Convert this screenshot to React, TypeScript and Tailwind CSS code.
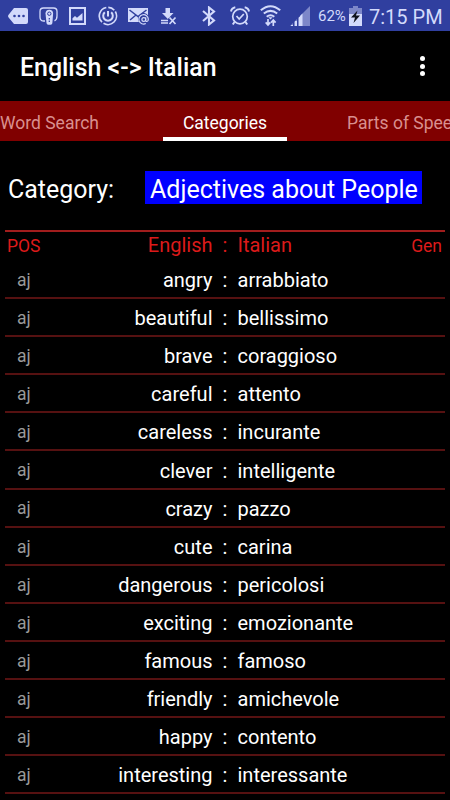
const words = [
  { english: "angry", italian: "arrabbiato" },
  { english: "beautiful", italian: "bellissimo" },
  { english: "brave", italian: "coraggioso" },
  { english: "careful", italian: "attento" },
  { english: "careless", italian: "incurante" },
  { english: "clever", italian: "intelligente" },
  { english: "crazy", italian: "pazzo" },
  { english: "cute", italian: "carina" },
  { english: "dangerous", italian: "pericolosi" },
  { english: "exciting", italian: "emozionante" },
  { english: "famous", italian: "famoso" },
  { english: "friendly", italian: "amichevole" },
  { english: "happy", italian: "contento" },
  { english: "interesting", italian: "interessante" },
];

function StatusBar() {
  return (
    <div className="flex h-[31px] shrink-0 items-center bg-[#303f9f] pt-px pl-2 text-[#d3dafb]">

      {/* MORE NOTIFICATIONS */}
      <svg className="h-4 w-5 shrink-0" viewBox="0 0 20 16">
        <path d="M6 0h12a2 2 0 0 1 2 2v12a2 2 0 0 1-2 2H6L.6 9.4a2 2 0 0 1 0-2.6z" fill="currentColor" />
        <circle cx="6.5" cy="8" r="1.3" fill="#303f9f" />
        <circle cx="11" cy="8" r="1.3" fill="#303f9f" />
        <circle cx="15.5" cy="8" r="1.3" fill="#303f9f" />
      </svg>

      {/* REMOTE */}
      <svg className="ml-[11px] h-[18px] w-[19px] shrink-0" viewBox="0 0 19 18" fill="none">
        <path d="M6 14H4.5C1.5 14 1 12 1 10V4.5C1 2 2 1 4.5 1h10C17 1 18 2 18 4.5V9c0 2.5-.7 4-2.5 4.8" stroke="currentColor" strokeWidth="1.3" />
        <path d="M6.5 6.5a3.8 3.8 0 0 1 7.6 0L13.4 16q-.2 1.800-1.700 1.800H9.200q-1.500 0-1.700-1.800z" fill="currentColor" />
        <circle cx="10.3" cy="6.7" r="1.7" fill="none" stroke="#303f9f" />
        <path d="M10.3 11v1.5m0 1v1.5" stroke="#303f9f" strokeWidth="1.2" />
      </svg>

      {/* GALLERY */}
      <svg className="ml-[11px] h-[18px] w-[17px] shrink-0" viewBox="0 0 17 18">
        <path d="M1 1h15v16H1z" fill="none" stroke="currentColor" strokeWidth="2" />
        <path d="M3.5 13.5v-2.3L6 9l2 1.7L13.5 6v7.5z" fill="currentColor" />
      </svg>

      {/* POWER RING */}
      <svg className="ml-3 h-5 w-5 shrink-0" viewBox="0 0 20 20" fill="none" stroke="currentColor">
        <path d="M8.3 1.5A8.6 8.6 0 0 0 4 16.2M5.5 17.3A8.6 8.6 0 0 0 17.3 5.5M16.3 4.2A8.6 8.6 0 0 0 10.3 1.4" strokeWidth="1.7" />
        <path d="M6.8 6.300a4.800 4.800 0 1 0 6.400 0" strokeWidth="2" />
        <path d="M10 5v5.500" strokeWidth="2" />
      </svg>

      {/* MAIL */}
      <svg className="ml-[10px] h-[18px] w-[22px] shrink-0" viewBox="0 0 22 18">
        <path d="M0 1h20v7.300a5.500 5.500 0 0 0-9 6.700H0z" fill="currentColor" />
        <path d="m1.500 3 8.500 6.500L18.500 3M2 13l6-5M12 8l2.500 2" fill="none" stroke="#303f9f" strokeWidth="1.5" />
        <circle cx="15.8" cy="12.5" r="1.9" fill="none" stroke="currentColor" strokeWidth="1.2" />
        <path d="M17.700 10.300v2.700q0 1.600 1.300 1.500 1.300-.2 1.300-2.300a4.700 4.700 0 1 0-2.500 4.300" fill="none" stroke="currentColor" strokeWidth="1.2" />
      </svg>

      {/* DOWNLOAD FAILED */}
      <svg className="ml-[11px] h-[18px] w-4 shrink-0" viewBox="0 0 16 18">
        <path d="M4.500 1h4.500v5h3.500L6.800 12 1 6h3.500z" fill="currentColor" />
        <path d="M0 13.500h7M0 16h7" fill="none" stroke="currentColor" strokeWidth="1.5" />
        <path d="m8.500 10.500 6 6.500m0-6.500-6 6.500" stroke="currentColor" strokeWidth="1.7" />
      </svg>

      {/* BLUETOOTH */}
      <svg className="ml-[25px] h-5 w-[14px] shrink-0" viewBox="0 0 14 20" fill="none">
        <path d="m1 5 11 9.500-5 4V1.500l5 4L1 15" stroke="currentColor" strokeWidth="2.1" />
      </svg>

      {/* ALARM */}
      <svg className="ml-[14px] h-5 w-[20px] shrink-0" viewBox="0 0 20 20" fill="none" stroke="currentColor">
        <circle cx="10" cy="10.5" r="7.3" strokeWidth="1.7" />
        <path d="m6.500 10 2.700 3 4.600-5" strokeWidth="1.7" />
        <path d="M1 5.500Q1.500 2 5.300 1.300M14.700 1.300Q18.500 2 19 5.500" strokeWidth="2" />
        <path d="m4.500 16-1.700 2.500M15.500 16l1.700 2.500" strokeWidth="2" />
      </svg>

      {/* WIFI */}
      <svg className="ml-[10px] h-[22px] w-[21px] shrink-0" viewBox="0 0 21 22" fill="none" stroke="currentColor">
        <path d="M.8 5.300q9.700-8.200 19.400 0M3.800 8.600q6.700-5.500 13.400 0M6.700 11.800q3.800-3 7.600 0" strokeWidth="2" />
        <path d="M8.300 12.200h4.400l-2.200 2.300z" fill="currentColor" stroke="none" />
        <path d="M8 14v6m-2.300-2.600L8 20l2.300-2.600M13.300 21v-6M11 17.600l2.300-2.600 2.300 2.600" strokeWidth="1.7" />
      </svg>

      {/* SIGNAL */}
      <svg className="ml-[9px] h-5 w-[21px] shrink-0" viewBox="0 0 21 20">
        <path d="M0 20 20 0v20z" fill="#7d87c9" />
        <path d="M1 19h2v1H1zM5 15h2v5H5zM9 11h2v9H9zM12.500 7.500v12.500H10V10z" fill="currentColor" />
        <path d="M3.500 16v4M7.500 12v8" stroke="#303f9f" />
      </svg>

      <span className="ml-[7px] w-[28px] shrink-0 pt-px text-[15px]">62%</span>

      {/* BATTERY */}
      <svg className="ml-[3px] h-5 w-[13px] shrink-0" viewBox="0 0 13 20">
        <path d="M4 0h5v2h4v7H0V2h4z" fill="#7d87c9" />
        <path d="M0 8h13v12H0z" fill="currentColor" />
        <path d="M8.500 4.500 2 11.500h4L4.500 17 11 9.500H7z" fill="#10131f" />
      </svg>

      <span className="ml-[7px] shrink-0 pt-[2px] text-[20px] leading-none whitespace-nowrap">7:15 PM</span>
    </div>
  );
}

export default function App() {
  return (
    <div className="flex h-[800px] w-[450px] flex-col overflow-hidden bg-black font-['Roboto',sans-serif] text-white">
      <StatusBar />

      {/* APP BAR */}
      <div className="flex h-[70px] shrink-0 items-center justify-between pt-[3px] pr-[25px] pl-5">
        <h1 className="text-[24.9px] font-medium">English &lt;-&gt; Italian</h1>
        <div className="flex flex-col gap-[2.5px] pb-[3px]">
          <span className="size-[5px] rounded-full bg-white" />
          <span className="size-[5px] rounded-full bg-white" />
          <span className="size-[5px] rounded-full bg-white" />
        </div>
      </div>

      {/* TABS */}
      <div className="flex h-10 shrink-0 bg-[#800000] text-[17.5px] leading-[45px] whitespace-nowrap text-[#d98f8f]">
        <div className="w-[163px] shrink-0">Word Search</div>
        <div className="h-10 w-[124px] shrink-0 border-b-4 border-white text-center text-white">Categories</div>
        <div className="ml-[60px] shrink-0">Parts of Speech</div>
      </div>

      {/* CATEGORY */}
      <div className="flex h-[89px] shrink-0 items-center pt-1 pl-2 text-[25px]">
        <span className="w-[137px] pt-1">Category:</span>
        <span className="h-[33px] w-[277px] bg-[#0000ff] pl-[5px] leading-[38px] whitespace-nowrap">Adjectives about People</span>
      </div>

      {/* WORD TABLE */}
      <div className="mx-[5px]">
        <div className="flex h-[31px] items-center border-t-2 border-[#a11d1d] text-[20px] text-[#dc1a1a]">
          <span className="w-[66px] pl-[2px] text-[17.5px]">POS</span>
          <span className="w-[141.5px] pb-[3px] text-right">English</span>
          <span className="w-[25px] pb-[3px] text-center">:</span>
          <span className="flex-1 pb-[3px]">Italian</span>
          <span className="pr-[3px] text-[17.5px]">Gen</span>
        </div>

        {words.map((word) => (
          <div
            key={word.english}
            className="flex h-[38.1px] items-center border-b-2 border-[#561111] pt-[2px] text-[20px]"
          >
            <span className="w-[66px] pl-[12px] text-[17.5px] text-[#999]">aj</span>
            <span className="w-[141.5px] text-right">{word.english}</span>
            <span className="w-[25px] text-center">:</span>
            <span>{word.italian}</span>
          </div>
        ))}
      </div>
    </div>
  );
}
